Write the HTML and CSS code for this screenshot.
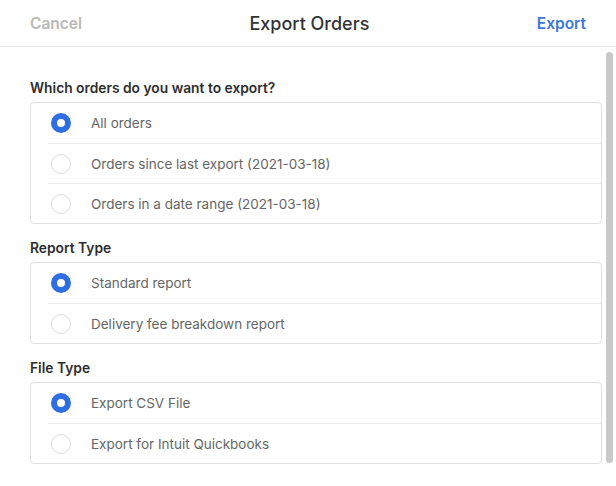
FILE: index.html
```html
<!DOCTYPE html>
<html lang="en">
<head>
    <meta charset="UTF-8">
    <title>Export Orders</title>
    <link rel="stylesheet" href="styles.css">
</head>
<body>
    <div class="modal">
        <header class="modal-header">
            <button class="link cancel">Cancel</button>
            <h1>Export Orders</h1>
            <button class="link export">Export</button>
        </header>

        <div class="modal-body">
            <section class="group">
                <h2>Which orders do you want to export?</h2>
                <div class="options">
                    <label class="option"><span class="radio checked"></span>All orders</label>
                    <label class="option"><span class="radio"></span>Orders since last export (2021-03-18)</label>
                    <label class="option"><span class="radio"></span>Orders in a date range (2021-03-18)</label>
                </div>
            </section>

            <section class="group">
                <h2>Report Type</h2>
                <div class="options">
                    <label class="option"><span class="radio checked"></span>Standard report</label>
                    <label class="option"><span class="radio"></span>Delivery fee breakdown report</label>
                </div>
            </section>

            <section class="group">
                <h2>File Type</h2>
                <div class="options">
                    <label class="option"><span class="radio checked"></span>Export CSV File</label>
                    <label class="option"><span class="radio"></span>Export for Intuit Quickbooks</label>
                </div>
            </section>
        </div>

        <div class="scrollbar"></div>
    </div>
</body>
</html>
```

FILE: styles.css
```css
/* Export orders modal */
body {
    margin: 0;
    background: #fff;
    font-family: Inter, "Open Sans", sans-serif;
    color: #333;
}

.modal {
    position: relative;
    width: 616px;
    height: 486px;
    overflow: hidden;
}

.modal-header {
    height: 47px;
    border-bottom: 1px solid #e8e8e8;
    display: flex;
    align-items: center;
    justify-content: space-between;
    padding: 0 30px;
    box-sizing: border-box;
}

.modal-header h1 {
    margin: 0;
    font-size: 18px;
    font-weight: 500;
    color: #333;
}

.link {
    background: none;
    border: none;
    padding: 0;
    font-family: inherit;
    font-size: 15.5px;
    font-weight: 600;
    cursor: pointer;
}

.cancel {
    color: #b8b8b8;
}

.export {
    color: #3b78d8;
}

.modal-body {
    padding: 32px 14px 0 30px;
}

.group {
    margin-bottom: 15px;
}

.group h2 {
    margin: 0 0 5px;
    font-size: 13.8px;
    line-height: 18px;
    font-weight: 600;
    color: #2e2e2e;
}

.options {
    border: 1px solid #e0e0e0;
    border-radius: 4px;
}

.option {
    display: flex;
    align-items: center;
    height: 40px;
    margin-left: 17px;
    font-size: 13.5px;
    color: #666;
    box-sizing: border-box;
}

.option + .option {
    border-top: 1px solid #ececec;
}

.radio {
    width: 20px;
    height: 20px;
    margin: 0 20px 0 3px;
    border: 1px solid #dcdcdc;
    border-radius: 50%;
    box-sizing: border-box;
    background: #fff;
}

.radio.checked {
    border: 6px solid #2f6fe4;
}

.scrollbar {
    position: absolute;
    top: 52px;
    right: 3px;
    width: 7px;
    height: 411px;
    border-radius: 4px;
    background: #c9c9c9;
}
```
